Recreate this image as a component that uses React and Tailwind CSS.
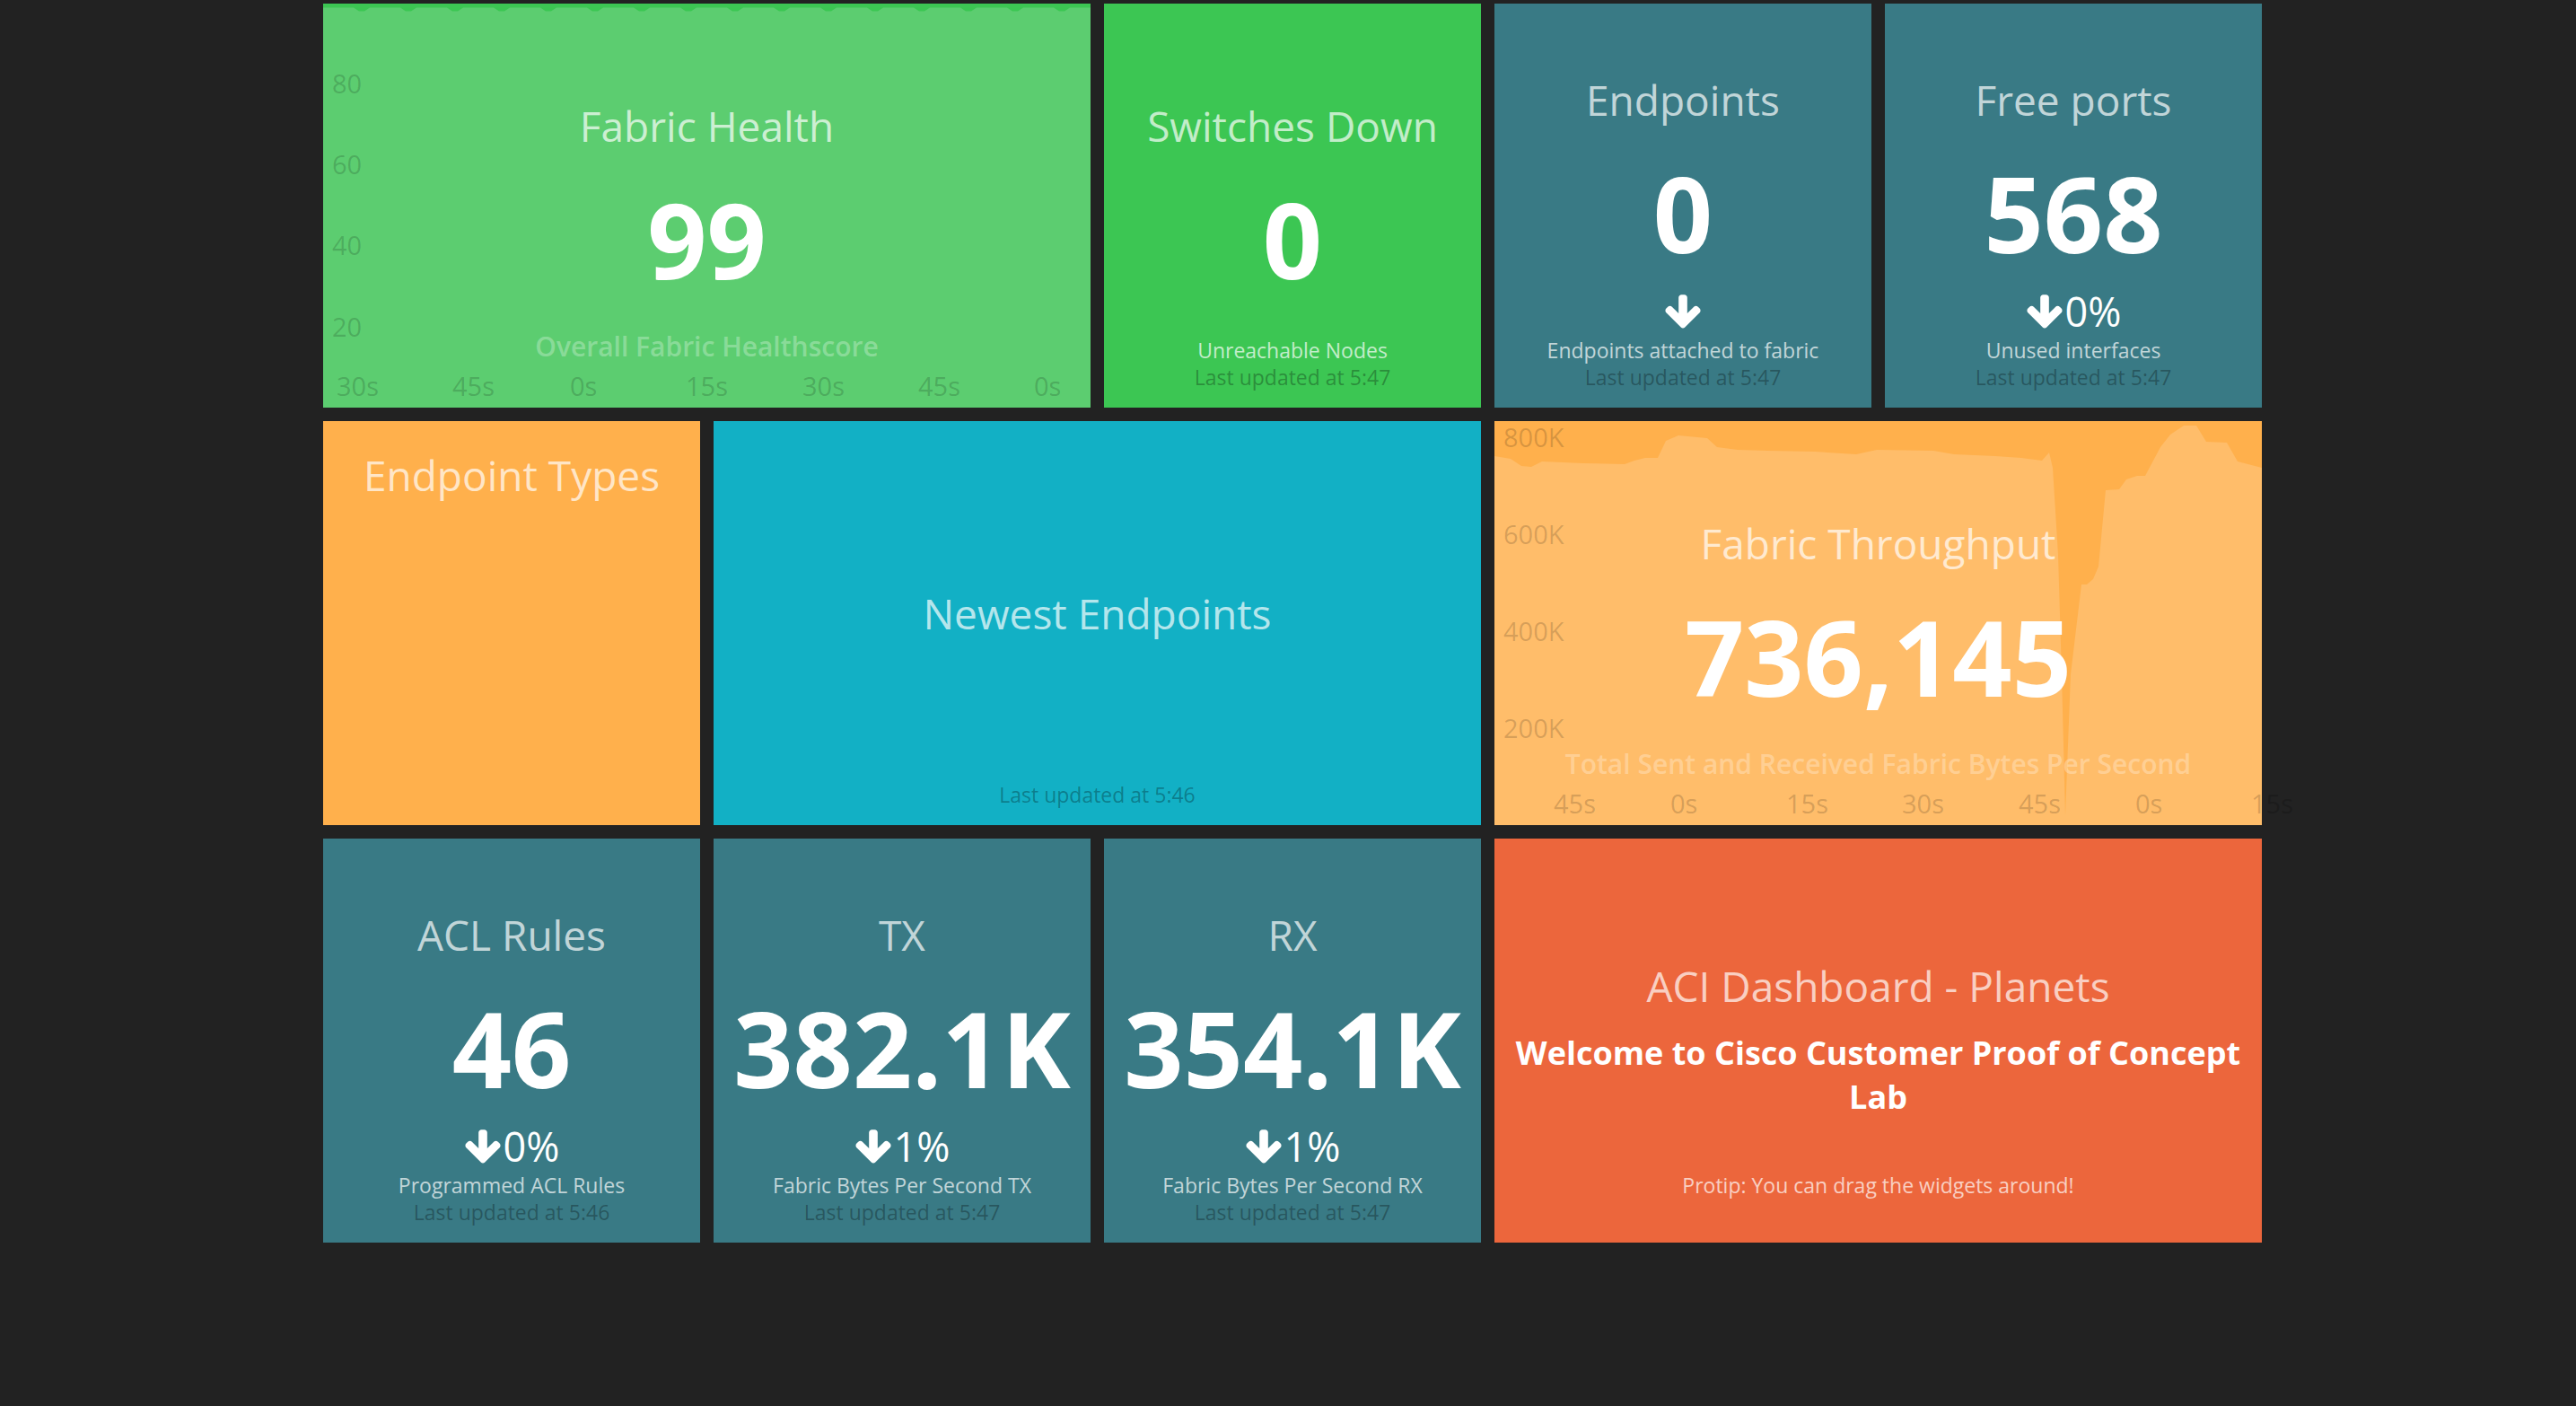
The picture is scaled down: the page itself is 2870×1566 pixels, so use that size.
import React from 'react';

const healthTicksX = [
    { label: '30s', left: 15 },
    { label: '45s', left: 144 },
    { label: '0s', left: 275 },
    { label: '15s', left: 404 },
    { label: '30s', left: 534 },
    { label: '45s', left: 663 },
    { label: '0s', left: 792 },
];

const healthTicksY = [
    { label: '80', top: 74 },
    { label: '60', top: 164 },
    { label: '40', top: 254 },
    { label: '20', top: 345 },
];

const throughputTicksX = [
    { label: '45s', left: 66 },
    { label: '0s', left: 196 },
    { label: '15s', left: 325 },
    { label: '30s', left: 454 },
    { label: '45s', left: 584 },
    { label: '0s', left: 714 },
    { label: '15s', left: 843 },
];

const throughputTicksY = [
    { label: '800K', top: 3 },
    { label: '600K', top: 111 },
    { label: '400K', top: 219 },
    { label: '200K', top: 327 },
];

// health series sits near 100, small dips every few samples
function healthPath() {
    let d = 'M0,450 L0,4.5';
    for (let k = 0; k < 16; k++) {
        const c = 43 + k * 52;
        d += ` L${c - 9},4.5 L${c - 3},8.5 L${c + 3},8.5 L${c + 9},4.5`;
    }
    d += ' L855,4.5 L855,450 Z';
    return d;
}

const throughputPoints = [
    [0, 39], [18, 42], [30, 50], [41, 51], [53, 45], [99, 47], [145, 48], [156, 44],
    [168, 41], [182, 41], [191, 22], [205, 16], [237, 19], [248, 29], [271, 32],
    [305, 33], [357, 34], [403, 37], [426, 32], [489, 33], [512, 37], [558, 39],
    [587, 41], [610, 44], [618, 35], [622, 52], [628, 149], [632, 282], [636, 439],
    [642, 282], [654, 182], [660, 182], [667, 176], [673, 162], [681, 77], [696, 76],
    [704, 65], [716, 61], [725, 61], [742, 29], [753, 15], [768, 5], [782, 5],
    [793, 23], [816, 24], [828, 45], [855, 52],
];

function throughputPath() {
    return 'M0,450 ' + throughputPoints.map(([x, y]) => `L${x},${y}`).join(' ') + ' L855,450 Z';
}

function ArrowDown() {
    return (
        <svg viewBox="0 0 1664 1792" className="inline-block h-[45px] w-[42px] align-[-6px]" fill="currentColor">
            <path d="M1611 832q0 53-37 90l-651 652q-39 37-91 37-53 0-90-37l-651-652q-38-36-38-90 0-53 38-91l74-75q39-37 91-37 53 0 90 37l294 294v-704q0-52 38-90t90-38h128q52 0 90 38t38 90v704l294-294q37-37 90-37 52 0 91 37l75 75q37 39 37 91z" />
        </svg>
    );
}

function Title({ children }) {
    return <h1 className="text-[46px] leading-[46px] font-normal text-white/70 whitespace-nowrap">{children}</h1>;
}

function Value({ children }) {
    return <h2 className="mt-[45px] text-[116px] leading-[117px] font-bold text-white whitespace-nowrap">{children}</h2>;
}

function MoreInfo({ children }) {
    return <p className="absolute inset-x-0 bottom-[52px] text-[23px] leading-[23px] text-white/70">{children}</p>;
}

function UpdatedAt({ children }) {
    return <p className="absolute inset-x-0 bottom-[22px] text-[23px] leading-[23px] text-black/30">{children}</p>;
}

function NumberWidget({ title, value, change, moreInfo, updated, color = 'bg-[#397a85]' }) {
    const withChange = change !== undefined;
    return (
        <div className={`relative flex flex-col items-center text-center ${color} ${withChange ? 'pt-[84px]' : 'pt-[113px]'}`}>
            <Title>{title}</Title>
            <Value>{value}</Value>
            {withChange && (
                <p className="mt-[28px] text-[45px] leading-[45px] font-normal text-white whitespace-nowrap">
                    <ArrowDown />
                    {change && <span className="ml-[2px]">{change}</span>}
                </p>
            )}
            <MoreInfo>{moreInfo}</MoreInfo>
            <UpdatedAt>Last updated at {updated}</UpdatedAt>
        </div>
    );
}

function GraphWidget({ title, value, moreInfo, bg, fill, path, ticksX, ticksY }) {
    return (
        <div className={`relative col-span-2 text-center ${bg}`}>
            <svg className="absolute left-0 top-0" width="855" height="450" viewBox="0 0 855 450">
                <path d={path} fill={fill} />
            </svg>
            {ticksY.map((t) => (
                <span
                    key={t.label}
                    className="absolute left-[10px] text-[29px] leading-[29px] text-black/[0.17]"
                    style={{ top: t.top }}
                >
                    {t.label}
                </span>
            ))}
            {ticksX.map((t, i) => (
                <span
                    key={i}
                    className="absolute top-[411px] text-[29px] leading-[29px] text-black/[0.18]"
                    style={{ left: t.left }}
                >
                    {t.label}
                </span>
            ))}
            <div className="relative flex flex-col items-center pt-[113px]">
                <Title>{title}</Title>
                <Value>{value}</Value>
            </div>
            <p className="absolute inset-x-0 top-[367px] text-[30px] leading-[30px] font-semibold text-white/30 whitespace-nowrap">
                {moreInfo}
            </p>
        </div>
    );
}

export default function App() {
    return (
        <div className="min-h-screen w-full bg-[#222222] font-['Open_Sans',sans-serif]">
            <div className="grid grid-cols-[repeat(5,420px)] grid-rows-[repeat(3,450px)] gap-[15px] pt-[4px] pl-[360px]">
                <GraphWidget
                    title="Fabric Health"
                    value="99"
                    moreInfo="Overall Fabric Healthscore"
                    bg="bg-[#3cc653]"
                    fill="#5ccd70"
                    path={healthPath()}
                    ticksX={healthTicksX}
                    ticksY={healthTicksY}
                />
                <NumberWidget
                    title="Switches Down"
                    value="0"
                    moreInfo="Unreachable Nodes"
                    updated="5:47"
                    color="bg-[#3cc653]"
                />
                <NumberWidget
                    title="Endpoints"
                    value="0"
                    change=""
                    moreInfo="Endpoints attached to fabric"
                    updated="5:47"
                />
                <NumberWidget
                    title="Free ports"
                    value="568"
                    change="0%"
                    moreInfo="Unused interfaces"
                    updated="5:47"
                />

                <div className="flex flex-col items-center bg-[#ffb04c] pt-[37px] text-center">
                    <Title>Endpoint Types</Title>
                </div>
                <div className="relative col-span-2 flex flex-col items-center bg-[#12b0c5] pt-[191px] text-center">
                    <Title>Newest Endpoints</Title>
                    <UpdatedAt>Last updated at 5:46</UpdatedAt>
                </div>
                <GraphWidget
                    title="Fabric Throughput"
                    value="736,145"
                    moreInfo="Total Sent and Received Fabric Bytes Per Second"
                    bg="bg-[#ffb04c]"
                    fill="#ffbd6a"
                    path={throughputPath()}
                    ticksX={throughputTicksX}
                    ticksY={throughputTicksY}
                />

                <NumberWidget
                    title="ACL Rules"
                    value="46"
                    change="0%"
                    moreInfo="Programmed ACL Rules"
                    updated="5:46"
                />
                <NumberWidget
                    title="TX"
                    value="382.1K"
                    change="1%"
                    moreInfo="Fabric Bytes Per Second TX"
                    updated="5:47"
                />
                <NumberWidget
                    title="RX"
                    value="354.1K"
                    change="1%"
                    moreInfo="Fabric Bytes Per Second RX"
                    updated="5:47"
                />
                <div className="relative col-span-2 flex flex-col items-center bg-[#ec663c] px-[12px] pt-[141px] text-center">
                    <Title>ACI Dashboard - Planets</Title>
                    <h3 className="mt-[27px] text-[36px] leading-[49px] font-bold text-white">
                        Welcome to Cisco Customer Proof of Concept
                        <br />
                        Lab
                    </h3>
                    <MoreInfo>Protip: You can drag the widgets around!</MoreInfo>
                </div>
            </div>
        </div>
    );
}
